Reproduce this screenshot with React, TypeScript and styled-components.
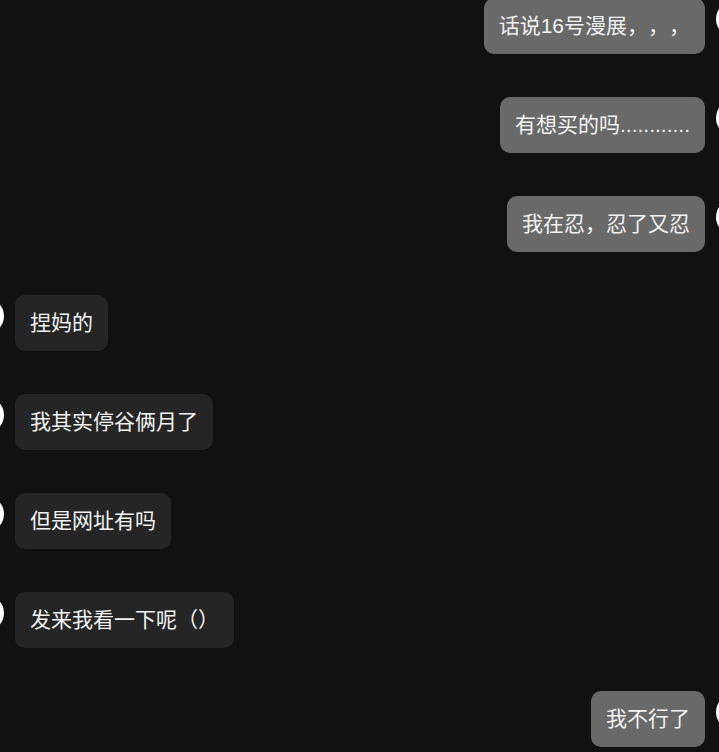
import styled, { createGlobalStyle } from 'styled-components';

interface Message {
  id: number;
  mine: boolean;
  text: string;
}

const messages: Message[] = [
  { id: 1, mine: true, text: '话说16号漫展，，，' },
  { id: 2, mine: true, text: '有想买的吗............' },
  { id: 3, mine: true, text: '我在忍，忍了又忍' },
  { id: 4, mine: false, text: '捏妈的' },
  { id: 5, mine: false, text: '我其实停谷俩月了' },
  { id: 6, mine: false, text: '但是网址有吗' },
  { id: 7, mine: false, text: '发来我看一下呢（）' },
  { id: 8, mine: true, text: '我不行了' },
];

const GlobalStyle = createGlobalStyle`
  html, body {
    margin: 0;
    padding: 0;
    background: #111111;
    overflow: hidden;
  }

  body {
    font-family: 'Liberation Sans', 'Noto Sans CJK SC', sans-serif;
  }
`;

export default function App() {
  return (
    <>
      <GlobalStyle />
      <ChatList>
        {messages.map((msg) => (
          <Row key={msg.id} mine={msg.mine}>
            <Avatar />
            <Bubble mine={msg.mine}>{msg.text}</Bubble>
          </Row>
        ))}
      </ChatList>
    </>
  );
}

const ChatList = styled.div`
  display: flex;
  flex-direction: column;
  gap: 43px;
  margin-top: -2px;
  height: 752px;
`;

// avatars hang off the screen edges, only a sliver shows
const Row = styled.div<{ mine: boolean }>`
  display: flex;
  flex-direction: ${({ mine }) => (mine ? 'row-reverse' : 'row')};
  align-items: flex-start;
  gap: 11px;
  margin: 0 -33px 0 -32px;
`;

const Avatar = styled.div`
  flex-shrink: 0;
  width: 36px;
  height: 36px;
  margin-top: 3px;
  border-radius: 50%;
  background: #ffffff;
`;

const Bubble = styled.div<{ mine: boolean }>`
  box-sizing: border-box;
  height: 56px;
  padding: 14px 15px;
  border-radius: 10px;
  background: ${({ mine }) => (mine ? '#696969' : '#252525')};
  color: #f2f2f2;
  font-size: 21px;
  line-height: 28px;
  white-space: nowrap;
  text-spacing-trim: space-all;
  font-feature-settings: 'chws' 0, 'halt' 0;
`;
